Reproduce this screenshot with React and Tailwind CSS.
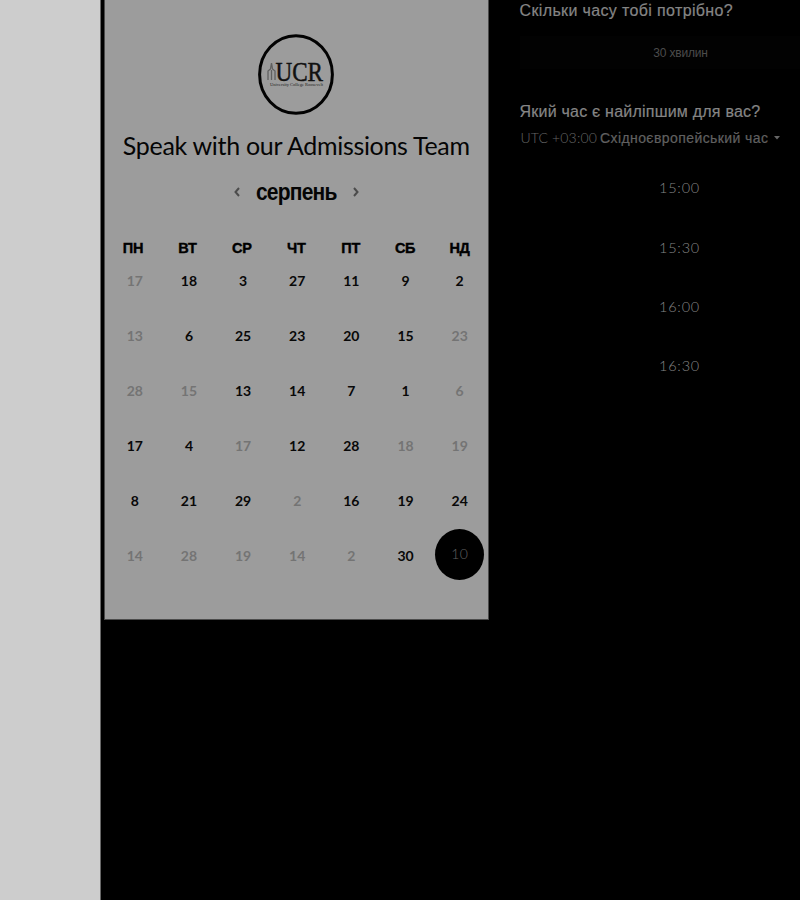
const weekdays = ['ПН', 'ВТ', 'СР', 'ЧТ', 'ПТ', 'СБ', 'НД'];

// Negative numbers are days that cannot be picked.
const weeks = [
  [-17, 18, 3, 27, 11, 9, 2],
  [-13, 6, 25, 23, 20, 15, -23],
  [-28, -15, 13, 14, 7, 1, -6],
  [17, 4, -17, 12, 28, -18, -19],
  [8, 21, 29, -2, 16, 19, 24],
  [-14, -28, -19, -14, -2, 30, 10],
];

const times = ['15:00', '15:30', '16:00', '16:30'];

function Logo() {
  return (
    <svg width="78" height="82" viewBox="0 0 78 82" className="block">
      <ellipse cx="39" cy="41.500" rx="36.4" ry="38.8" fill="none" stroke="#020202" strokeWidth="3" />
      <g fill="none" stroke="#606060" strokeWidth="1.300">
        <path d="M11 47v-9l2.500-2 1-6 1 6 2.500 2v9M14.500 37v10" />
      </g>
      <text x="18.500" y="47.500" textLength="47.500" lengthAdjust="spacingAndGlyphs" fontSize="28" fill="#111111" stroke="#111111" strokeWidth="0.500" fontFamily="Liberation Serif, serif">UCR</text>
      <text x="13" y="53" textLength="53" lengthAdjust="spacingAndGlyphs" fontSize="4.500" fill="#222222" fontFamily="Liberation Serif, serif">University College Roosevelt</text>
    </svg>
  );
}

function Chevron({ d }) {
  return (
    <svg width="8" height="12" viewBox="0 0 8 12" fill="none" stroke="#4c4c4c" strokeWidth="2">
      <path d={d} />
    </svg>
  );
}

function Day({ value, selected }) {
  if (selected) {
    return (
      <div className="-mt-0.5 flex h-[51px] w-[49px] shrink-0 items-center justify-center rounded-[50%] bg-black pb-0.5 text-[14px] font-light tracking-[0.3px] text-[#606060]">
        {value}
      </div>
    );
  }
  return <span className={value < 0 ? 'text-[#747474]' : 'text-[#080808]'}>{Math.abs(value)}</span>;
}

function Calendar() {
  return (
    <section className="ml-[3.5px] flex h-[620px] w-[384.5px] shrink-0 flex-col items-center border-r border-b border-l border-[#4b4b4b] bg-[#9c9c9c] pt-[33px]">
      <Logo />
      <h1 className="mt-[14px] h-8 whitespace-nowrap font-['Lato',sans-serif] text-[25px] leading-8 tracking-[-0.31px] text-[#050505]">
        Speak with our Admissions Team
      </h1>
      <div className="mt-[15px] flex h-8 items-center">
        <Chevron d="M6 2 2.500 6 6 10" />
        <span className="mx-[15px] w-[81px] scale-y-110 whitespace-nowrap text-center font-['Liberation_Sans',sans-serif] text-[21px] font-bold leading-8 tracking-[-0.8px] text-[#050505]">
          серпень
        </span>
        <Chevron d="M2 2l3.500 4L2 10" />
      </div>
      <div className="mt-[29px] grid h-[22px] w-[381px] grid-cols-7 text-center font-['Liberation_Sans',sans-serif] text-[14.5px] font-bold leading-[22px] tracking-[-0.3px] text-black [-webkit-text-stroke:0.4px_black]">
        {weekdays.map((day) => (
          <span key={day}>{day}</span>
        ))}
      </div>
      <div className="-mt-[6.5px] grid w-[381px] grid-cols-7 pl-0.5 font-['Lato',sans-serif] text-[14px] font-bold">
        {weeks.flat().map((value, i) => (
          <div key={i} className="flex h-[55px] items-center justify-center">
            <Day value={value} selected={i === 41} />
          </div>
        ))}
      </div>
    </section>
  );
}

function Times() {
  return (
    <section className="ml-[31px] w-[320px] shrink-0 whitespace-nowrap font-['Liberation_Sans',sans-serif]">
      <h2 className="h-[22px] text-base leading-[22px] tracking-[0.36px] text-[#858585] [-webkit-text-stroke:0.2px_#858585]">Скільки часу тобі потрібно?</h2>
      <div className="mt-[14px] flex h-[33px] items-center justify-center bg-[#020202] pl-0.5 text-xs tracking-[-0.2px] text-[#4c4c4c]">30 хвилин</div>
      <h2 className="mt-8 h-[22px] text-base leading-[22px] tracking-[0.22px] text-[#858585] [-webkit-text-stroke:0.2px_#858585]">Який час є найліпшим для вас?</h2>
      <div className="mt-1 flex h-[22px] items-center text-sm tracking-[0.42px]">
        <span className="mr-[3px] pl-px font-['Lato',sans-serif] font-light tracking-[0.15px] text-[#656565]">UTC +03:00</span>
        <span className="text-[#606060] [-webkit-text-stroke:0.2px_#606060]">Східноєвропейський час</span>
        <svg width="6" height="4" viewBox="0 0 6 4" className="ml-1.5" fill="#666666"><path d="M0 0h6L3 3.500z" /></svg>
      </div>
      <div className="mt-[9.5px] flex flex-col items-center">
        {times.map((time) => (
          <div key={time} className="flex h-[59.3px] items-center font-['Lato',sans-serif] text-[14.5px] font-light tracking-[0.8px] text-[#858585]">{time}</div>
        ))}
      </div>
    </section>
  );
}

export default function App() {
  return (
    <main className="flex h-[900px] w-[800px] items-start overflow-hidden bg-black">
      <div className="h-full w-[100.5px] shrink-0 border-r border-[#686868] bg-[#cdcdcd]" />
      <Calendar />
      <Times />
    </main>
  );
}
